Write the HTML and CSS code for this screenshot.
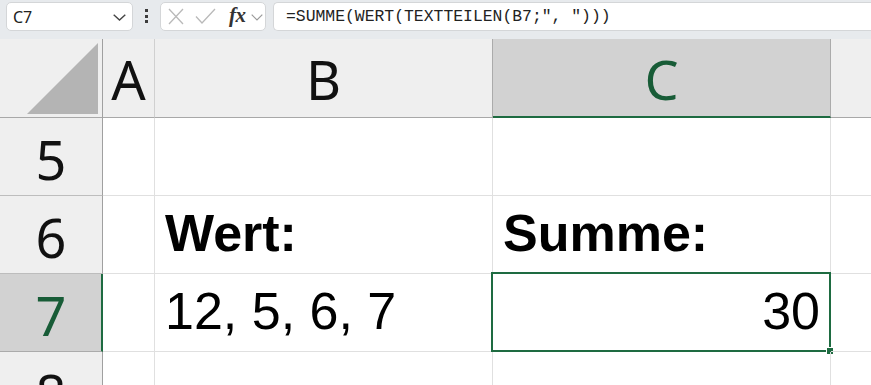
FILE: index.html
```html
<!DOCTYPE html>
<html lang="de">
<head>
<meta charset="utf-8">
<title>Excel</title>
<link rel="stylesheet" href="styles.css">
</head>
<body>
<div class="topbar">
  <div class="namebox">
    <span class="nb-text">C7</span>
    <svg class="nb-chev" width="13" height="7" viewBox="0 0 13 7"><polyline points="0.7,0.7 6.5,6 12.3,0.7" fill="none" stroke="#444" stroke-width="1.4"/></svg>
  </div>
  <div class="dots"><i></i><i></i><i></i></div>
  <div class="iconbox">
    <svg class="ic-x" width="16" height="17" viewBox="0 0 16 17"><path d="M1 1 L15 16 M15 1 L1 16" stroke="#b9b9b9" stroke-width="1.3" fill="none"/></svg>
    <svg class="ic-check" width="21" height="16" viewBox="0 0 21 16"><polyline points="1,8.5 7,15 20,1" fill="none" stroke="#b9b9b9" stroke-width="1.3"/></svg>
    <span class="fx">fx</span>
    <svg class="ic-chev" width="12" height="7" viewBox="0 0 12 7"><polyline points="0.7,0.7 6,6 11.3,0.7" fill="none" stroke="#9a9a9a" stroke-width="1.2"/></svg>
  </div>
  <div class="formula">=SUMME(WERT(TEXTTEILEN(B7;", ")))</div>
</div>

<div class="sheet">
  <div class="corner"><svg width="72" height="72" viewBox="0 0 72 72"><polygon points="0,71 71,71 71,0" fill="#b4b4b4"/></svg></div>
  <div class="colhead">A</div>
  <div class="colhead">B</div>
  <div class="colhead sel">C</div>
  <div class="colhead last"></div>

  <div class="rowhead">5</div>
  <div class="cell"></div>
  <div class="cell"></div>
  <div class="cell"></div>
  <div class="cell last"></div>

  <div class="rowhead">6</div>
  <div class="cell"></div>
  <div class="cell bold">Wert:</div>
  <div class="cell bold">Summe:</div>
  <div class="cell last"></div>

  <div class="rowhead sel">7</div>
  <div class="cell"></div>
  <div class="cell">12, 5, 6, 7</div>
  <div class="cell num active">30<span class="selbox"><span class="handle"></span></span></div>
  <div class="cell last"></div>

  <div class="rowhead">8</div>
  <div class="cell"></div>
  <div class="cell"></div>
  <div class="cell"></div>
  <div class="cell last"></div>
</div>
</body>
</html>
```

FILE: styles.css
```css
* { box-sizing: border-box; }
html, body { margin: 0; padding: 0; }
body {
  width: 871px;
  height: 385px;
  overflow: hidden;
  background: #ffffff;
  font-family: "Noto Sans", "Liberation Sans", sans-serif;
}

.topbar {
  height: 39px;
  background: #e7eaed;
  display: flex;
  align-items: flex-start;
  padding: 2px 0 0 6px;
}

.namebox {
  width: 127px;
  height: 29px;
  background: #fff;
  border: 1px solid #d4d6d8;
  border-radius: 5px;
  display: flex;
  align-items: center;
  justify-content: space-between;
  padding: 0 6px 0 6px;
}
.nb-text {
  font-family: "Noto Sans", sans-serif;
  font-size: 16px;
  color: #222;
}
.nb-chev { margin-top: 1px; }

.dots {
  width: 27px;
  height: 28px;
  display: flex;
  flex-direction: column;
  align-items: center;
  justify-content: center;
  gap: 2.5px;
}
.dots i {
  display: block;
  width: 3px;
  height: 3px;
  background: #3c3c3c;
}

.iconbox {
  width: 106px;
  height: 29px;
  background: #fff;
  border: 1px solid #d4d6d8;
  border-radius: 5px;
  display: flex;
  align-items: center;
  padding-left: 7px;
}
.ic-x { margin-right: 11px; }
.ic-check { margin-right: 13px; margin-top: -1px; }
.fx {
  font-family: "Liberation Serif", serif;
  font-style: italic;
  font-weight: bold;
  font-size: 21px;
  color: #333;
  line-height: 1;
  margin-top: -3px;
  margin-right: 5px;
  letter-spacing: -0.5px;
}
.ic-chev { margin-top: 1px; }

.formula {
  margin-left: 7px;
  flex: 1;
  height: 29px;
  background: #fff;
  border: 1px solid #d4d6d8;
  border-right: none;
  border-radius: 5px 0 0 5px;
  font-family: "Liberation Mono", monospace;
  font-size: 16.4px;
  color: #222;
  line-height: 27px;
  padding-left: 12px;
  white-space: pre;
}

.sheet {
  display: grid;
  grid-template-columns: 103px 52px 338px 338px 1fr;
  grid-template-rows: 79px 78px 78px 78px 78px;
}

.corner {
  background: #efefef;
  border-right: 1px solid #a0a0a0;
  border-bottom: 1px solid #a8a8a8;
  display: flex;
  align-items: flex-end;
  justify-content: flex-end;
  padding: 0 3px 2px 0;
}
.corner svg { display: block; }

.colhead {
  background: #efefef;
  border-right: 1px solid #d0d0d0;
  border-bottom: 1px solid #a8a8a8;
  display: flex;
  align-items: center;
  justify-content: center;
  font-size: 54px;
  color: #111;
  line-height: 1;
  padding-top: 2px;
}
.colhead.sel {
  background: #d2d2d2;
  color: #185c37;
  border-bottom: 2px solid #1e6b41;
  border-right-color: #ababab;
  box-shadow: -1px 0 0 #ababab;
  padding-top: 3px;
}
.colhead.last { border-right: none; }

.rowhead {
  background: #efefef;
  border-right: 1px solid #a0a0a0;
  border-bottom: 1px solid #bdbdbd;
  display: flex;
  align-items: center;
  justify-content: center;
  font-size: 54px;
  color: #111;
  line-height: 1;
  padding-top: 4px;
}
.rowhead.sel {
  background: #d2d2d2;
  color: #185c37;
  border-right: 2px solid #1e6b41;
  border-bottom-color: #ababab;
  padding-left: 1px;
}

.cell {
  border-right: 1px solid #e0e0e0;
  border-bottom: 1px solid #e0e0e0;
  display: flex;
  align-items: flex-end;
  padding: 0 10px 9px 10px;
  font-family: "Liberation Sans", Arial, sans-serif;
  font-size: 52px;
  color: #000;
  line-height: 1.15;
  white-space: nowrap;
  position: relative;
}
.cell.last { border-right: none; }
.cell.bold { font-weight: bold; }
.cell.num { justify-content: flex-end; }

.selbox {
  position: absolute;
  left: -2px;
  top: -2px;
  right: -1px;
  bottom: -1px;
  border: 2px solid #1e6b41;
}
.handle {
  position: absolute;
  right: -4px;
  bottom: -4px;
  width: 6px;
  height: 6px;
  background: #1e6b41;
  border: 1px solid #fff;
  box-sizing: content-box;
  margin: -1px;
}
```
